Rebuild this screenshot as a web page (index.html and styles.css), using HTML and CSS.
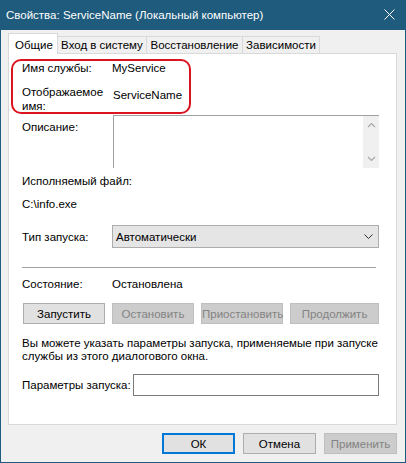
FILE: index.html
```html
<!DOCTYPE html>
<html lang="ru">
<head>
    <meta charset="UTF-8">
    <title>Свойства: ServiceName</title>
    <link rel="stylesheet" href="styles.css">
</head>
<body>
    <div class="window">
        <!-- Title bar -->
        <div class="titlebar">
            <span class="title">Свойства: ServiceName (Локальный компьютер)</span>
            <svg class="close" width="11" height="11" viewBox="0 0 11 11">
                <path d="M0.5 0.5 L10.5 10.5 M10.5 0.5 L0.5 10.5" stroke="#fff" stroke-width="1" fill="none"/>
            </svg>
        </div>

        <div class="content">
            <!-- Tabs -->
            <div class="tabs">
                <div class="tab active">Общие</div>
                <div class="tab tab-logon">Вход в систему</div>
                <div class="tab tab-recovery">Восстановление</div>
                <div class="tab tab-deps">Зависимости</div>
            </div>

            <div class="panel">
                <div class="highlight">
                    <div class="row">
                        <span class="label">Имя службы:</span>
                        <span>MyService</span>
                    </div>
                    <div class="row row-display">
                        <span class="label">Отображаемое<br>имя:</span>
                        <span class="display-value">ServiceName</span>
                    </div>
                </div>

                <div class="row row-desc">
                    <span class="label label-desc">Описание:</span>
                    <div class="memo">
                        <div class="scrollbar">
                            <svg width="9" height="6" viewBox="0 0 9 6"><path d="M1 5 L4.5 1.5 L8 5" stroke="#a6a6a6" stroke-width="1.2" fill="none"/></svg>
                            <svg width="9" height="6" viewBox="0 0 9 6"><path d="M1 1 L4.5 4.5 L8 1" stroke="#a6a6a6" stroke-width="1.2" fill="none"/></svg>
                        </div>
                    </div>
                </div>

                <div class="text exe-label">Исполняемый файл:</div>
                <div class="text exe-path">C:\info.exe</div>

                <div class="row row-startup">
                    <span class="label">Тип запуска:</span>
                    <div class="combo">
                        <span>Автоматически</span>
                        <svg width="9" height="5" viewBox="0 0 9 5"><path d="M0.5 0.5 L4.5 4.5 L8.5 0.5" stroke="#333" stroke-width="1" fill="none"/></svg>
                    </div>
                </div>

                <div class="separator"></div>

                <div class="row row-state">
                    <span class="label">Состояние:</span>
                    <span>Остановлена</span>
                </div>

                <div class="state-buttons">
                    <button class="btn">Запустить</button>
                    <button class="btn" disabled>Остановить</button>
                    <button class="btn" disabled>Приостановить</button>
                    <button class="btn btn-last" disabled>Продолжить</button>
                </div>

                <p class="hint">Вы можете указать параметры запуска, применяемые при запуске службы из этого диалогового окна.</p>

                <div class="row row-params">
                    <span class="label-params">Параметры запуска:</span>
                    <div class="field"></div>
                </div>
            </div>

            <!-- Dialog buttons -->
            <div class="dialog-buttons">
                <button class="btn btn-dialog btn-default">ОК</button>
                <button class="btn btn-dialog">Отмена</button>
                <button class="btn btn-dialog" disabled>Применить</button>
            </div>
        </div>
    </div>
</body>
</html>
```

FILE: styles.css
```css
/* General */
body {
    margin: 0;
    font-family: "Liberation Sans", Arial, sans-serif;
    font-size: 11.5px;
    color: #000;
    background: #f0f0f0;
}

.window {
    width: 406px;
    height: 463px;
    box-sizing: border-box;
    border: 1px solid #1e5b7d;
    border-top: none;
    background: #f0f0f0;
}

/* Title bar */
.titlebar {
    height: 30px;
    background: #1e5b7d;
    color: #fff;
    display: flex;
    align-items: center;
    justify-content: space-between;
    padding: 0 10px 0 5px;
}

.title {
    padding-bottom: 1px;
}

.close {
    margin-bottom: 1px;
}

.content {
    padding: 3px 8px 0 7px;
}

/* Tabs */
.tabs {
    display: flex;
    align-items: flex-end;
    height: 21px;
}

.tab {
    height: 18px;
    line-height: 17px;
    padding: 0;
    text-align: center;
    white-space: nowrap;
    border: 1px solid #d9d9d9;
    border-bottom: none;
    border-left: none;
    box-sizing: border-box;
    background: #f0f0f0;
}

.tab-logon {
    width: 89px;
}

.tab-recovery {
    width: 96px;
}

.tab-deps {
    width: 77px;
}

.tab.active {
    position: relative;
    z-index: 2;
    height: 21px;
    line-height: 23px;
    width: 50px;
    padding: 0 0 0 6px;
    text-align: left;
    border-left: 1px solid #d9d9d9;
    background: #fff;
}

.panel {
    position: relative;
    z-index: 1;
    margin-top: -1px;
    height: 372px;
    box-sizing: border-box;
    border: 1px solid #d9d9d9;
    background: #fff;
    padding: 0 17px 0 13px;
}

/* Rows */
.row {
    display: flex;
    line-height: 14px;
}

.label {
    width: 90px;
    flex-shrink: 0;
}

.highlight {
    margin: 5px 0 0 -11px;
    width: 180px;
    height: 55px;
    box-sizing: border-box;
    border: 2px solid #dc1420;
    border-radius: 10px;
    padding-left: 9px;
}

.row-display {
    margin-top: 10px;
}

.display-value {
    margin: 3px 0 0 1px;
}

.row-desc {
    margin-top: 1px;
}

.label-desc {
    width: 91px;
    padding-top: 5px;
}

.memo {
    flex: 1;
    height: 53px;
    box-sizing: border-box;
    border-top: 1px solid #a0a0a0;
    border-left: 1px solid #a0a0a0;
    display: flex;
    justify-content: flex-end;
}

.scrollbar {
    width: 16px;
    background: #f0f0f0;
    display: flex;
    flex-direction: column;
    justify-content: space-between;
    align-items: center;
    padding: 6px 0 6px;
}

.text {
    line-height: 14px;
}

.exe-label {
    margin-top: 6px;
}

.exe-path {
    margin-top: 9px;
}

.row-startup {
    margin-top: 14px;
    align-items: center;
}

.combo {
    flex: 1;
    height: 23px;
    box-sizing: border-box;
    border: 1px solid #adadad;
    background: #e5e5e5;
    display: flex;
    align-items: center;
    justify-content: space-between;
    padding: 0 5px 0 3px;
}

.separator {
    margin: 19px 3px 0 0;
    height: 1px;
    background: #a0a0a0;
}

.row-state {
    margin-top: 9px;
}

/* Buttons */
.btn {
    font-family: inherit;
    font-size: 11.5px;
    color: #000;
    height: 21px;
    padding: 0;
    border: 1px solid #adadad;
    background: #e1e1e1;
}

.btn:disabled {
    color: #838383;
    border-color: #bfbfbf;
    background: #cccccc;
}

.state-buttons {
    display: flex;
    gap: 7px;
    margin: 12px 0 0 1px;
}

.state-buttons .btn {
    width: 82px;
}

.state-buttons .btn-last {
    flex: 1;
}

.hint {
    margin: 13px 0 0;
    line-height: 13px;
}

.row-params {
    margin-top: 11px;
    align-items: center;
}

.label-params {
    width: 111px;
    white-space: nowrap;
}

.field {
    flex: 1;
    height: 22px;
    box-sizing: border-box;
    border: 1px solid #7a7a7a;
    background: #fff;
}

.dialog-buttons {
    display: flex;
    justify-content: flex-end;
    gap: 8px;
    margin-top: 8px;
}

.btn-dialog {
    width: 73px;
}

.btn-default {
    border: 2px solid #0078d7;
}
```
